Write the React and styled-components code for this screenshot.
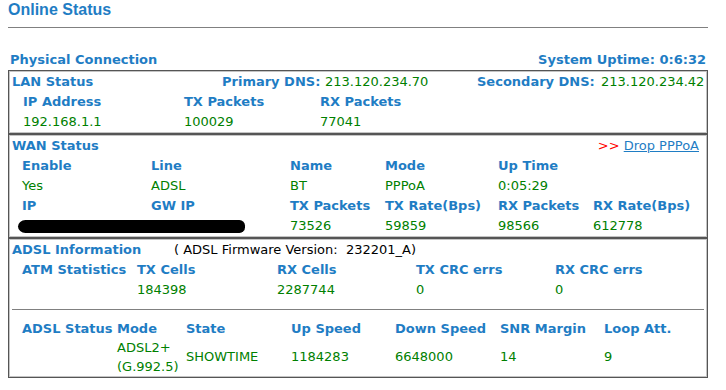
import React from "react";
import styled, { createGlobalStyle } from "styled-components";

const blue = "#1f7dc4";
const green = "#008000";

const GlobalStyle = createGlobalStyle`
  body {
    margin: 0;
    background: #fff;
    font-family: "DejaVu Sans", Verdana, sans-serif;
    font-size: 13px;
  }
`;

const Page = styled.div`
  width: 700px;
  padding: 0 8px;
`;

const Title = styled.h1`
  margin: 0;
  font: bold 16px/20px "Liberation Sans", Arial, sans-serif;
  color: ${blue};
`;

const Rule = styled.div`
  height: 1px;
  margin-top: 7px;
  background: #808080;
`;

const Caption = styled.div`
  display: flex;
  justify-content: space-between;
  margin-top: 22px;
  padding: 0 2px;
  height: 20px;
  line-height: 20px;
  font-weight: bold;
  color: ${blue};
`;

const Box = styled.div`
  box-sizing: border-box;
  width: 700px;
  border: 1px solid #555;
  padding: 1px;
  box-shadow: inset 0 0 0 1px #c4c4c4;
`;

const Row = styled.div`
  display: grid;
  grid-template-columns: ${(p) => p.$cols};
  align-items: center;
  padding-left: ${(p) => p.$indent}px;
  min-height: 20px;
  line-height: ${(p) => p.$lh || "20px"};
`;

const HeadRow = styled.div`
  display: flex;
  justify-content: space-between;
  padding: 0 7px 0 2px;
  height: 20px;
  line-height: 20px;
`;

const Label = styled.span`
  font-weight: bold;
  color: ${blue};
  white-space: nowrap;
`;

const Value = styled.span`
  color: ${green};
  white-space: nowrap;
`;

const Note = styled.span`
  color: #000;
  white-space: pre;
`;

const Arrow = styled.span`
  color: #f00;
`;

const Link = styled.a`
  color: ${blue};
  text-decoration: underline;
  cursor: pointer;
`;

const Divider = styled.div`
  height: 1px;
  margin: 9px 2px;
  background: #808080;
`;

const Redacted = styled.div`
  grid-column: span 2;
  width: 227px;
  height: 13px;
  margin-left: -4px;
  background: #000;
  border-radius: 8px 6px 6px 8px / 7px 6px 6px 7px;
`;

const LAN_TOP = "210px 103px 152px 124px 1fr";
const LAN_COLS = "161px 136px 1fr";
const WAN_COLS = "129px 139px 95px 113px 95px 1fr";
const ATM_COLS = "115px 140px 139px 139px 1fr";
const DSL_COLS = "95px 69px 105px 104px 105px 104px 1fr";

export default function App() {
  return (
    <>
      <GlobalStyle />
      <Page>
        <Title>Online Status</Title>
        <Rule />
        <Caption>
          <span>Physical Connection</span>
          <span>System Uptime: 0:6:32</span>
        </Caption>

        <Box>
          <Row $cols={LAN_TOP} $indent={2}>
            <Label>LAN Status</Label>
            <Label>Primary DNS:</Label>
            <Value>213.120.234.70</Value>
            <Label>Secondary DNS:</Label>
            <Value>213.120.234.42</Value>
          </Row>
          <Row $cols={LAN_COLS} $indent={13}>
            <Label>IP Address</Label>
            <Label>TX Packets</Label>
            <Label>RX Packets</Label>
          </Row>
          <Row $cols={LAN_COLS} $indent={13}>
            <Value>192.168.1.1</Value>
            <Value>100029</Value>
            <Value>77041</Value>
          </Row>
        </Box>

        <Box>
          <HeadRow>
            <Label>WAN Status</Label>
            <span>
              <Arrow>&gt;&gt; </Arrow>
              <Link>Drop PPPoA</Link>
            </span>
          </HeadRow>
          <Row $cols={WAN_COLS} $indent={12}>
            <Label>Enable</Label>
            <Label>Line</Label>
            <Label>Name</Label>
            <Label>Mode</Label>
            <Label>Up Time</Label>
            <span />
          </Row>
          <Row $cols={WAN_COLS} $indent={12}>
            <Value>Yes</Value>
            <Value>ADSL</Value>
            <Value>BT</Value>
            <Value>PPPoA</Value>
            <Value>0:05:29</Value>
            <span />
          </Row>
          <Row $cols={WAN_COLS} $indent={12}>
            <Label>IP</Label>
            <Label>GW IP</Label>
            <Label>TX Packets</Label>
            <Label>TX Rate(Bps)</Label>
            <Label>RX Packets</Label>
            <Label>RX Rate(Bps)</Label>
          </Row>
          <Row $cols={WAN_COLS} $indent={12}>
            <Redacted />
            <Value>73526</Value>
            <Value>59859</Value>
            <Value>98566</Value>
            <Value>612778</Value>
          </Row>
        </Box>

        <Box>
          <Row $cols="162px 1fr" $indent={2}>
            <Label>ADSL Information</Label>
            <Note>( ADSL Firmware Version:  232201_A)</Note>
          </Row>
          <Row $cols={ATM_COLS} $indent={12}>
            <Label>ATM Statistics</Label>
            <Label>TX Cells</Label>
            <Label>RX Cells</Label>
            <Label>TX CRC errs</Label>
            <Label>RX CRC errs</Label>
          </Row>
          <Row $cols={ATM_COLS} $indent={12}>
            <span />
            <Value>184398</Value>
            <Value>2287744</Value>
            <Value>0</Value>
            <Value>0</Value>
          </Row>
          <Divider />
          <Row $cols={DSL_COLS} $indent={12}>
            <Label>ADSL Status</Label>
            <Label>Mode</Label>
            <Label>State</Label>
            <Label>Up Speed</Label>
            <Label>Down Speed</Label>
            <Label>SNR Margin</Label>
            <Label>Loop Att.</Label>
          </Row>
          <Row $cols={DSL_COLS} $indent={12} $lh="18.5px">
            <span />
            <Value>
              ADSL2+
              <br />
              (G.992.5)
            </Value>
            <Value>SHOWTIME</Value>
            <Value>1184283</Value>
            <Value>6648000</Value>
            <Value>14</Value>
            <Value>9</Value>
          </Row>
        </Box>
      </Page>
    </>
  );
}
